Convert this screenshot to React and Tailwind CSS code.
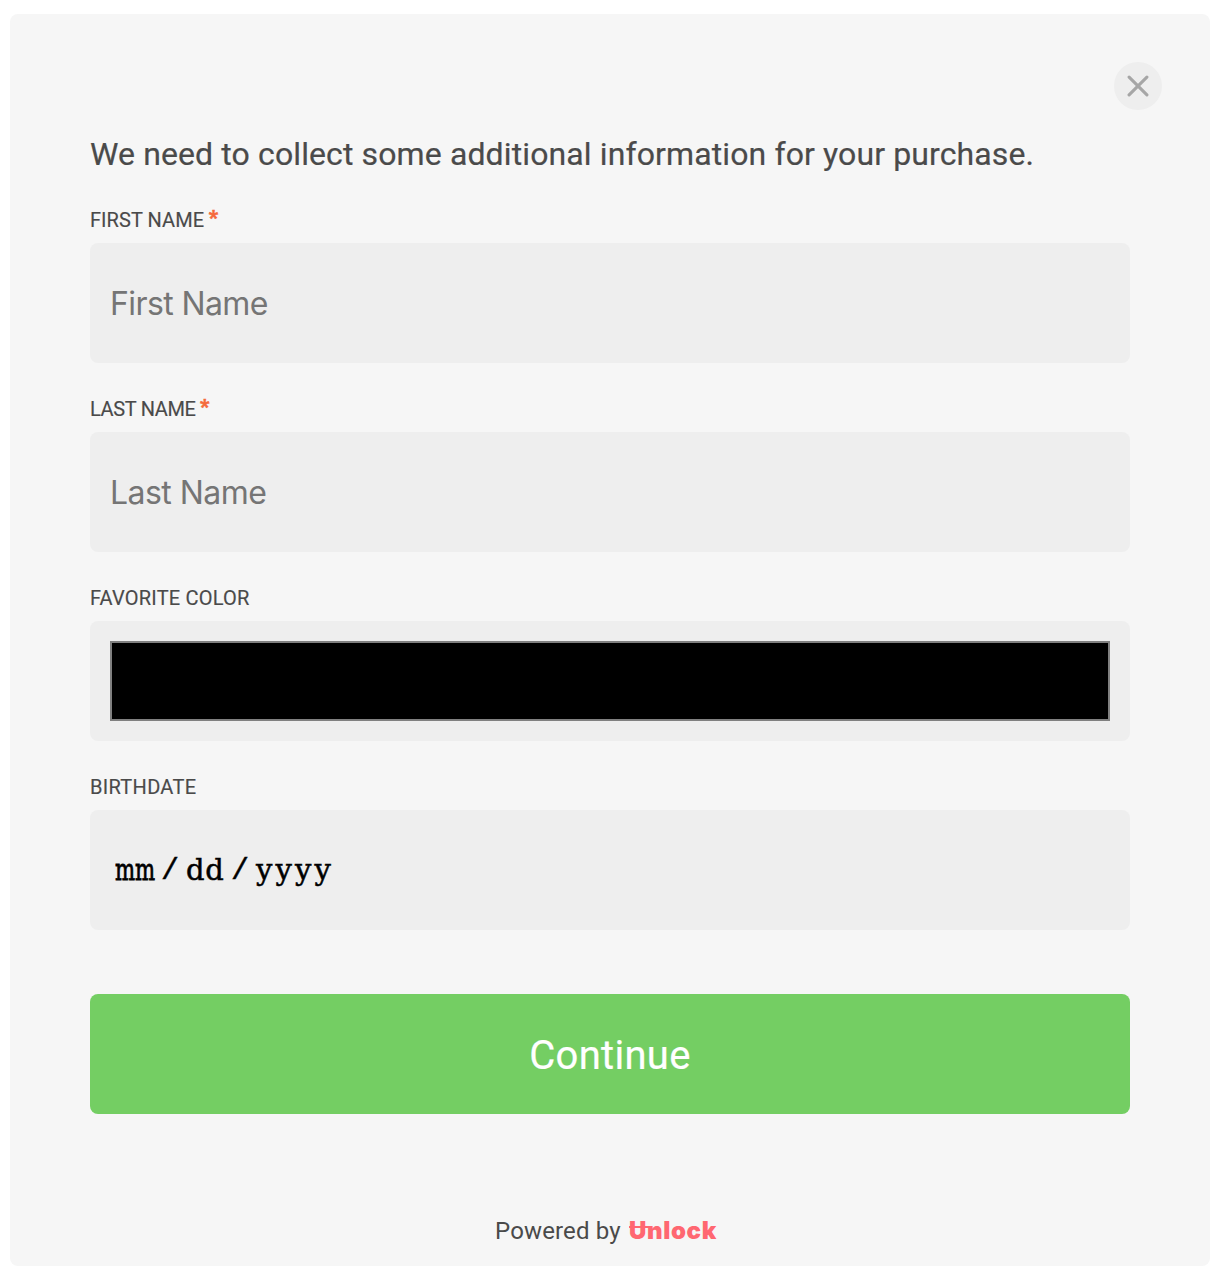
import React from "react";

function Label({ children, required, spacing }) {
  return (
    <div className="flex h-[26px] items-center whitespace-pre text-[20px] leading-[26px] text-[#4a4a4a] [-webkit-text-stroke:0.15px]">
      <span className={spacing}>{children}</span>
      {required && <span className="-mt-[5px] ml-[4.5px] font-black text-[#f56a3c] [-webkit-text-stroke:0.5px]">*</span>}
    </div>
  );
}

const box = "mt-[10px] block h-[120px] w-full rounded-lg bg-[#eeeeee] px-5";

export default function App() {
  return (
    <div className="min-h-[1286px] bg-white pl-[10px] pt-[14px] font-['Roboto',sans-serif]">
      <main className="flex h-[1252px] w-[1200px] flex-col rounded-lg bg-[#f6f6f6] px-20 pt-12">
        <button className="-mr-8 flex size-12 shrink-0 items-center justify-center self-end rounded-full bg-[#eeeeee]" aria-label="Close">
          <svg width="22" height="22" viewBox="0 0 22 22" fill="none" stroke="#a6a6a6" strokeWidth="3.1" strokeLinecap="round">
            <path d="M2.1 2.1 19.9 19.9M19.9 2.1 2.1 19.9" />
          </svg>
        </button>
        <h1 className="mt-[24px] h-10 whitespace-nowrap text-[32px] leading-10 tracking-[0.115px] text-[#4a4a4a] [-webkit-text-stroke:0.2px]">
          We need to collect some additional information for your purchase.
        </h1>
        <form className="mt-[33px] flex flex-col gap-[33px]">
          <div>
            <Label required spacing="tracking-[0.06px]">FIRST NAME</Label>
            <input className={`${box} font-['Inter',sans-serif] text-[32px] tracking-[-0.6px] placeholder:text-[#757575]`} placeholder="First Name" />
          </div>
          <div>
            <Label required spacing="tracking-[-0.35px]">LAST NAME</Label>
            <input className={`${box} font-['Inter',sans-serif] text-[32px] tracking-[-0.55px] placeholder:text-[#757575]`} placeholder="Last Name" />
          </div>
          <div>
            <Label spacing="tracking-[0.2px]">FAVORITE COLOR</Label>
            <div className={`${box} py-5`}>
              <div className="h-20 border-2 border-[#808080] bg-black" />
            </div>
          </div>
          <div>
            <Label spacing="tracking-[0.3px]">BIRTHDATE</Label>
            <div className={`${box} flex items-center font-['DejaVu_Serif',serif] text-[29px] text-black [-webkit-text-stroke:0.5px]`}>
              <span className="ml-[5px] mt-px w-[46px] origin-left scale-x-[0.73] [-webkit-text-stroke:0.8px]">mm</span>
              <span className="mt-[3px] w-[25px] font-['Liberation_Mono',monospace] text-[30px]">/</span>
              <span className="mt-px w-[45px] tracking-[0.6px]">dd</span>
              <span className="mt-[3px] w-[25px] font-['Liberation_Mono',monospace] text-[30px]">/</span>
              <span className="mt-px tracking-[3.1px]">yyyy</span>
            </div>
          </div>
        </form>
        <button className="mt-16 h-[120px] shrink-0 rounded-lg bg-[#74ce63] pt-1 text-[40px] tracking-[0.3px] text-white [-webkit-text-stroke:0.2px]">Continue</button>
        <footer className="mt-[101px] flex h-8 items-center pl-[405px] text-[24px] leading-8 text-[#4a4a4a]">
          <span className="w-[134px] whitespace-nowrap tracking-[0.15px]">Powered by</span>
          <span className="relative font-['Inter',sans-serif] text-[24px] font-black tracking-[0.65px] text-[#ff6771]">
            Unlock
            <span className="absolute left-0 top-[11px] h-[2px] w-[20px] bg-[#ff6771]" />
          </span>
        </footer>
      </main>
    </div>
  );
}
